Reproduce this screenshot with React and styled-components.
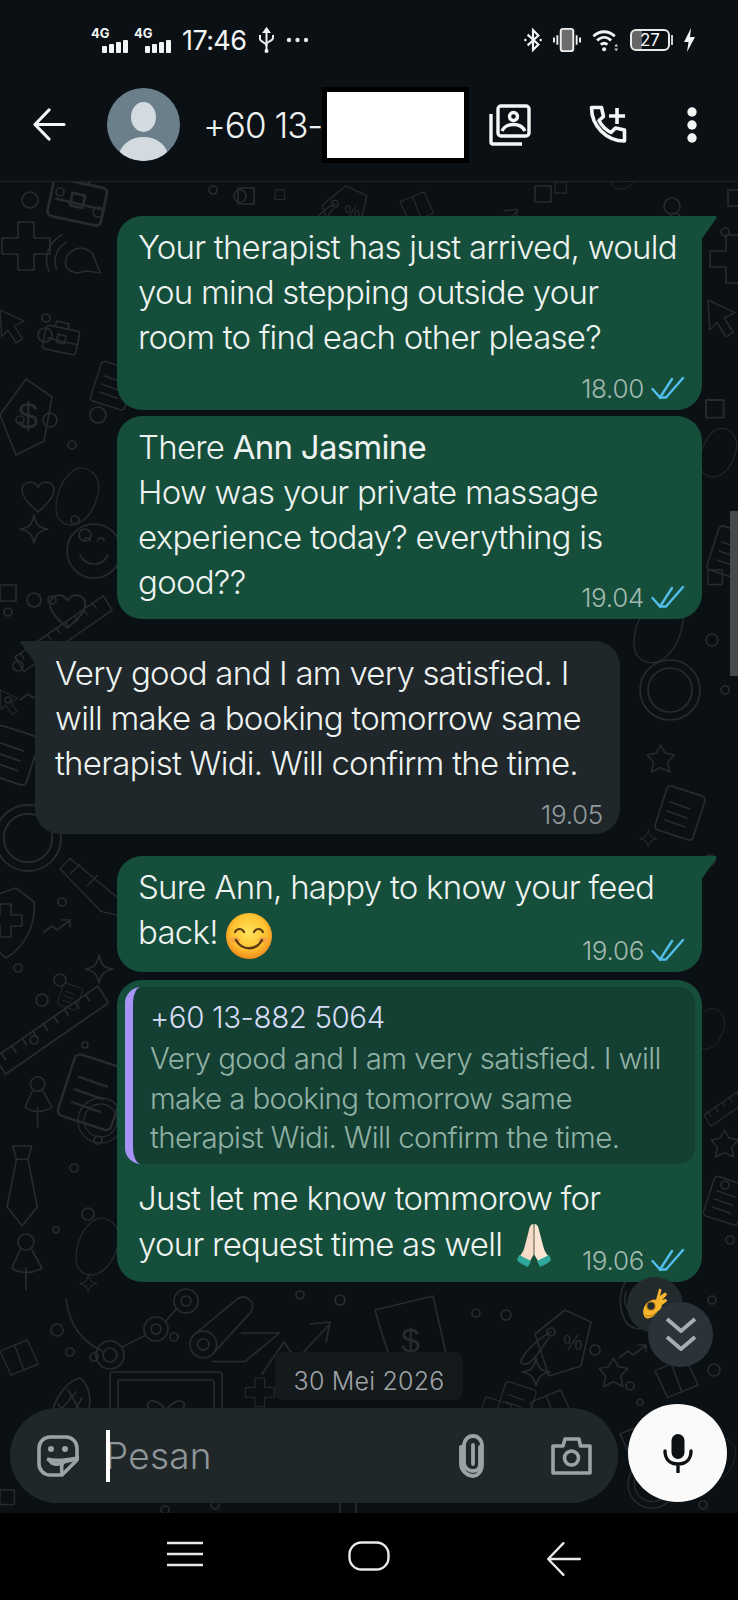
import React from 'react';
import styled, { createGlobalStyle } from 'styled-components';

const GlobalStyle = createGlobalStyle`
  html, body {
    margin: 0;
    padding: 0;
    background: #0b1014;
  }
  * {
    box-sizing: border-box;
  }
`;

const Screen = styled.div`
  width: 738px;
  height: 1600px;
  display: flex;
  flex-direction: column;
  overflow: hidden;
  background: #0b1014;
  color: #eef2f1;
  font-family: Inter, 'Noto Sans', sans-serif;
  font-weight: 300;
`;

/* status bar */
const StatusBar = styled.div`
  height: 80px;
  flex: none;
  display: flex;
  align-items: center;
  justify-content: space-between;
  padding: 0 43px 0 93px;
`;

const StatusGroup = styled.div`
  display: flex;
  align-items: center;
  gap: ${props => props.$gap}px;
`;

const Clock = styled.span`
  margin-left: 3px;
  font-size: 27px;
  font-weight: 400;
  letter-spacing: -0.6px;
  color: #f2f4f4;
`;

const BatteryBox = styled.div`
  width: 40px;
  height: 22px;
  border: 2px solid #e8eaea;
  border-radius: 6px;
  display: flex;
  align-items: center;
  justify-content: center;
  overflow: hidden;
  font-size: 17px;
  font-weight: 400;
  color: #f2f4f4;
  background: linear-gradient(90deg, #666 0 28%, transparent 28%);
`;

/* header */
const Header = styled.header`
  height: 102px;
  flex: none;
  display: flex;
  align-items: center;
  padding: 0 41px 12px 33px;
  border-bottom: 1px solid #1d2327;
`;

const Avatar = styled.div`
  width: 73px;
  height: 73px;
  margin-left: 41px;
  flex: none;
  border-radius: 50%;
  overflow: hidden;
  background: #6b7f8b;
`;

const Title = styled.div`
  margin-left: 23px;
  width: 113px;
  flex: none;
  font-size: 35px;
  font-weight: 300;
  letter-spacing: -1px;
  white-space: nowrap;
`;

const Redaction = styled.div`
  position: relative;
  width: 147px;
  height: 76px;
  margin-left: 6px;
  flex: none;
  background: #fff;
  border: 5px solid #000;
`;

const HeaderActions = styled.div`
  margin-left: auto;
  display: flex;
  align-items: center;
  gap: 58px;
`;

/* chat */
const Chat = styled.main`
  position: relative;
  flex: 1;
  display: flex;
  flex-direction: column;
  padding: 34px 0 10px;
  overflow: hidden;
`;

const Wallpaper = styled.svg`
  position: absolute;
  inset: 0;
  width: 738px;
  height: 1331px;
  fill: none;
  stroke: #272b2e;
  stroke-width: 1.7;
  stroke-linecap: round;
  stroke-linejoin: round;

  text {
    fill: #272b2e;
    stroke: none;
    font-family: 'Liberation Sans', sans-serif;
  }
`;

const MessageList = styled.div`
  position: relative;
  display: flex;
  flex-direction: column;
`;

const Bubble = styled.div`
  position: relative;
  width: 585px;
  margin-top: ${props => props.$gap || 0}px;
  margin-left: ${props => (props.$incoming ? '35px' : '117px')};
  padding: ${props => (props.$incoming ? '10px 17px 5px 20px' : '9px 17px 7px 21px')};
  background: ${props => (props.$incoming ? '#1f272a' : '#154e3a')};
  border-radius: 25px;
  border-top-left-radius: ${props => (props.$incoming ? 0 : 25)}px;
  border-top-right-radius: ${props => (props.$tail ? 0 : 25)}px;

  ${props =>
    props.$tail &&
    `&::after {
      content: '';
      position: absolute;
      top: 0;
      right: -15px;
      width: 16px;
      height: 24px;
      background: #154e3a;
      clip-path: polygon(0 0, 92% 0, 100% 6%, 0 100%);
    }`}

  ${props =>
    props.$incoming &&
    `&::before {
      content: '';
      position: absolute;
      top: 0;
      left: -15px;
      width: 16px;
      height: 24px;
      background: #1f272a;
      clip-path: polygon(100% 0, 8% 0, 0 6%, 100% 100%);
    }`}
`;

const Line = styled.div`
  width: fit-content;
  height: ${props => props.$height || 45}px;
  font-size: 33px;
  line-height: ${props => props.$height || 45}px;
  letter-spacing: -0.75px;
  color: #eef3f1;
  white-space: pre;

  strong {
    font-weight: 400;
  }
`;

const Meta = styled.div`
  position: relative;
  height: 30px;
  margin-top: ${props => props.$top}px;
  margin-left: auto;
  width: fit-content;
  display: flex;
  align-items: center;
  justify-content: flex-end;
  gap: 7px;
  font-size: 26px;
  letter-spacing: -0.3px;
  font-weight: 300;
  color: ${props => (props.$incoming ? '#949b9f' : '#a2b9af')};
`;

const ReplyBubble = styled(Bubble)`
  padding-top: 7px;
`;

const Quote = styled.div`
  margin: 0 -10px 11px -13px;
  padding: 10px 0 0 17px;
  height: 177px;
  background: #143f33;
  border-left: 8px solid #a593f5;
  border-radius: 16px;
`;

const QuoteName = styled.div`
  margin-bottom: 2px;
  font-size: 29.5px;
  line-height: 40px;
  letter-spacing: -0.4px;
  color: #d6dcf6;
`;

const QuoteText = styled.div`
  font-size: 29.5px;
  line-height: 39.5px;
  letter-spacing: -0.62px;
  color: #90b1a3;
  white-space: pre;
`;

const InlineEmoji = styled.svg`
  display: inline-block;
  margin: -8px 0 -8px ${props => props.$left}px;
  vertical-align: ${props => props.$drop}px;
`;

const ReactionBadge = styled.div`
  position: absolute;
  top: 1095px;
  right: 55px;
  width: 56px;
  height: 56px;
  display: flex;
  justify-content: center;
  padding-top: 11px;
  border-radius: 50%;
  background: #232a2e;
`;

const ScrollButton = styled.div`
  position: absolute;
  top: 1120px;
  right: 25px;
  width: 65px;
  height: 65px;
  display: flex;
  align-items: center;
  justify-content: center;
  border-radius: 50%;
  background: #2a3338;
`;

const ScrollTrack = styled.div`
  position: absolute;
  top: 329px;
  right: 0;
  width: 8px;
  height: 165px;
  background: #45494c;
`;

const Footer = styled.div`
  position: relative;
  margin-top: auto;
  display: flex;
  flex-direction: column;
  align-items: flex-start;
`;

const DateChip = styled.div`
  align-self: flex-start;
  margin: 0 0 4px 275px;
  width: 188px;
  height: 48px;
  padding-top: 10px;
  display: flex;
  align-items: center;
  justify-content: center;
  border-radius: 8px;
  background: #14191c;
  font-size: 25px;
  font-weight: 300;
  letter-spacing: 0.2px;
  color: #a0a5a8;
`;

const ComposerRow = styled.div`
  display: flex;
  align-items: flex-start;
  width: 100%;
  padding: 0 11px 0 10px;
`;

const Composer = styled.div`
  width: 608px;
  height: 95px;
  margin-top: 4px;
  display: flex;
  align-items: center;
  padding: 0 26px 0 27px;
  border-radius: 48px;
  background: #202729;
`;

const Caret = styled.div`
  position: relative;
  width: 4px;
  height: 52px;
  margin-left: 27px;
  background: #fff;
`;

const Placeholder = styled.div`
  margin-left: -5px;
  flex: 1;
  font-size: 37px;
  font-weight: 300;
  letter-spacing: 0.2px;
  color: #8f9699;
`;

const MicButton = styled.div`
  width: 99px;
  height: 98px;
  margin-left: 10px;
  display: flex;
  align-items: center;
  justify-content: center;
  border-radius: 50%;
  background: #fafafa;
`;

const NavBar = styled.nav`
  height: 87px;
  flex: none;
  display: flex;
  align-items: flex-start;
  padding: 28px 156px 0 167px;
  justify-content: space-between;
  background: #000;
`;

/* status icons */
const Signal = () => (
  <svg width="36" height="25" viewBox="0 0 36 25" overflow="visible">
    <text x="-2" y="10" fontSize="13" fontWeight="700" fill="#f2f4f4" fontFamily="Inter, sans-serif">4G</text>
    <rect x="9" y="18" width="5" height="7" rx="1" fill="#f2f4f4" />
    <rect x="16" y="16" width="5" height="9" rx="1" fill="#f2f4f4" />
    <rect x="23" y="14" width="5" height="11" rx="1" fill="#f2f4f4" />
    <rect x="30" y="12" width="5" height="13" rx="1" fill="#f2f4f4" />
  </svg>
);

const Usb = () => (
  <svg width="17" height="27" viewBox="0 0 17 27" fill="none" stroke="#eef0f0" strokeWidth="2" style={{ marginLeft: 5 }}>
    <path d="M8.5 2v23" />
    <path d="M6 5l2.5-3.5L11 5z" fill="#eef0f0" />
    <path d="M2 8v4c0 3 6.5 3.5 6.5 7M15 8v3c0 3-6.5 3.5-6.5 6" />
    <circle cx="8.5" cy="24" r="2" fill="#eef0f0" stroke="none" />
  </svg>
);

const Dots3 = () => (
  <svg width="23" height="6" viewBox="0 0 23 6" fill="#e4e6e6" style={{ marginLeft: 4 }}>
    <circle cx="3" cy="3" r="2.2" />
    <circle cx="11.5" cy="3" r="2.2" />
    <circle cx="20" cy="3" r="2.2" />
  </svg>
);

const Bluetooth = () => (
  <svg width="18" height="26" viewBox="0 0 20 26" fill="none" stroke="#f2f4f4" strokeWidth="2.4">
    <path d="M4 7l12 11-6 6V2l6 6L4 19" />
    <circle cx="1.5" cy="13" r="1.4" fill="#f2f4f4" stroke="none" />
    <circle cx="18.5" cy="13" r="1.4" fill="#f2f4f4" stroke="none" />
  </svg>
);

const Vibrate = () => (
  <svg width="28" height="26" viewBox="0 0 29 26" fill="none" stroke="#eceeee" strokeWidth="2">
    <rect x="8" y="1.5" width="13" height="23" rx="2.5" fill="#6c6c6c" />
    <path d="M4.5 8v10M1 10.5v5M24.5 8v10M28 10.5v5" />
  </svg>
);

const Wifi = () => (
  <svg width="27" height="26" viewBox="0 0 29 26" fill="none" stroke="#f2f4f4" strokeWidth="3">
    <path d="M1.5 9c7-6.5 16-6.5 23 0M5.5 13.5c4.700-4.500 10.300-4.500 15 0M9.500 18c2.300-2 4.700-2 7 0" />
    <circle cx="13" cy="23" r="2.200" fill="#f2f4f4" stroke="none" />
    <path d="M26 17l-2 3h4zM26 25l-2-3h4z" fill="#d0d0d0" stroke="none" />
  </svg>
);

const Battery = () => (
  <StatusGroup $gap={1}>
    <BatteryBox>27</BatteryBox>
    <svg width="2" height="10"><rect width="2" height="10" fill="#cfcfcf" /></svg>
  </StatusGroup>
);

const Bolt = () => (
  <svg width="11" height="24" viewBox="0 0 11 24" fill="#f2f4f4">
    <path d="M7 0L0 14h4.500L3 24l8-15H6z" />
  </svg>
);

/* header icons */
const BackArrow = ({ size = 33, width = 3.2, color = '#f4f6f6' }) => (
  <svg width={size} height={size} viewBox="0 0 33 33" fill="none" stroke={color} strokeWidth={width} strokeLinecap="round" strokeLinejoin="round">
    <path d="M31 16.500H3M16 2L2 16.500 16 31" />
  </svg>
);

const GalleryIcon = () => (
  <svg width="42" height="42" viewBox="0 0 42 42" fill="none" stroke="#f4f6f6" strokeWidth="3.400">
    <rect x="9" y="2" width="31" height="30" rx="3" />
    <circle cx="24.500" cy="12.500" r="4" />
    <path d="M13 27c2.500-5 7-6.500 11.500-6.500S33.500 22 36 27" />
    <path d="M2 10v28a2 2 0 0 0 2 2h29" />
  </svg>
);

const CallAddIcon = () => (
  <svg width="40" height="40" viewBox="0 0 40 40" fill="none" stroke="#f4f6f6" strokeWidth="3.600" strokeLinejoin="round">
    <path d="M2.500 2.500h10l2 9-4.500 4c2.500 5 7 9.500 12 12l4.500-4.500 9 2v11c-18 0-33-15-33-33.500z" />
    <path d="M28 3v16M20 11h16" />
  </svg>
);

const MoreIcon = () => (
  <svg width="10" height="36" viewBox="0 0 10 36" fill="#f4f6f6">
    <circle cx="5" cy="5" r="4.700" />
    <circle cx="5" cy="18" r="4.700" />
    <circle cx="5" cy="31" r="4.700" />
  </svg>
);

const Ticks = () => (
  <svg width="34" height="24" viewBox="0 0 34 24" fill="none" stroke="#53bdeb" strokeWidth="2.400" strokeLinecap="round">
    <path d="M1.500 13l7.500 8.500L21 3" />
    <path d="M15 21.500L32 2M9 21.500h6" />
  </svg>
);

/* emoji */
const SmileEmoji = () => (
  <InlineEmoji $left={8} $drop={-7} width="46" height="46" viewBox="0 0 46 46">
    <defs>
      <radialGradient id="smileFace" cx="50%" cy="42%" r="58%">
        <stop offset="0%" stopColor="#ffe45c" />
        <stop offset="65%" stopColor="#fdc22f" />
        <stop offset="100%" stopColor="#f08a1d" />
      </radialGradient>
    </defs>
    <circle cx="23" cy="23" r="23" fill="url(#smileFace)" />
    <ellipse cx="9" cy="27" rx="5" ry="3" fill="#f79a4a" opacity="0.7" />
    <ellipse cx="37" cy="27" rx="5" ry="3" fill="#f79a4a" opacity="0.7" />
    <path d="M9 19c2-4 7-4 9 0M28 19c2-4 7-4 9 0" fill="none" stroke="#5b3a14" strokeWidth="2.200" strokeLinecap="round" />
    <path d="M10 27c6 11 20 11 26 0" fill="none" stroke="#5b3a14" strokeWidth="2.500" strokeLinecap="round" />
  </InlineEmoji>
);

const PrayEmoji = () => (
  <InlineEmoji $left={14} $drop={-3} width="36" height="44" viewBox="0 0 36 44">
    <path d="M17.500 1c-3 0-4 3-5 8L8 26c-1 3-3 5-4 7l10 5 3.500-6z" fill="#f6dcc8" />
    <path d="M18.500 1c3 0 4 3 5 8l4.500 17c1 3 3 5 4 7l-10 5-3.500-6z" fill="#fbe6d6" />
    <path d="M18 3v28" stroke="#c9a48e" strokeWidth="1" />
    <path d="M3 32l-2 5c2 3 7 5 11 7l3-6zM33 32l2 5c-2 3-7 5-11 7l-3-6z" fill="#2fa79a" />
  </InlineEmoji>
);

const OkEmoji = () => (
  <svg width="28" height="33" viewBox="0 0 28 33">
    <path d="M18 1c2-1 3 1 2 3l-1 4 4-3c2-1 4 1 2 3l-4 4 3-1c2 0 3 2 1 3l-4 3c-1 6-6 11-12 13-3 1-5 0-6-2-2-5 0-11 4-14 3-2 6-3 8-2z" fill="#f7b52b" />
    <circle cx="10" cy="18" r="4" fill="#232a2e" stroke="#9a6a10" strokeWidth="1.200" />
    <path d="M4 27c3 2 8 1 11-2" fill="none" stroke="#c9851a" strokeWidth="1.500" />
  </svg>
);

/* composer icons */
const StickerIcon = () => (
  <svg width="42" height="42" viewBox="0 0 42 42" fill="none" stroke="#9ca3a5" strokeWidth="3.600" strokeLinejoin="round">
    <path d="M13 2h16c6 0 11 5 11 11v12L25 40H13C7 40 2 35 2 29V13C2 7 7 2 13 2z" />
    <path d="M10 24c6 2 15 2 31-1 0 1-9 2-14 4-2 1-3 4-2 12" />
    <path d="M12 24c2 5 7 6 13 4" />
    <circle cx="14" cy="14" r="3" fill="#9ca3a5" stroke="none" />
    <circle cx="28" cy="14" r="3" fill="#9ca3a5" stroke="none" />
  </svg>
);

const ClipIcon = () => (
  <svg width="28" height="44" viewBox="0 0 28 44" fill="none" stroke="#9ca3a5" strokeWidth="3.800" strokeLinecap="round" style={{ marginRight: 64 }}>
    <path d="M21 13v17c0 4-3 7-7 7s-9-3-9-8V12C5 6 9 2 14 2s9 4 9 10v18c0 7-4 12-9 12S2 37 2 30V13" />
    <path d="M14 11v19" />
  </svg>
);

const CameraIcon = () => (
  <svg width="41" height="38" viewBox="0 0 41 38" fill="none" stroke="#9ca3a5" strokeWidth="3.600" strokeLinejoin="round">
    <path d="M2 9h10l2-7h14l1.500 7H39v27H2z" />
    <circle cx="20.500" cy="21" r="7" />
  </svg>
);

const MicIcon = () => (
  <svg width="30" height="40" viewBox="0 0 30 40" fill="none" stroke="#0d1114" strokeWidth="3.400" strokeLinecap="round">
    <rect x="8.500" y="1" width="13" height="25" rx="6.500" fill="#0d1114" stroke="none" />
    <path d="M2 18c0 9 6 13 13 13s13-4 13-13M15 31v8" />
  </svg>
);

const DoubleChevron = () => (
  <svg width="34" height="38" viewBox="0 0 34 38" fill="none" stroke="#a4aeb4" strokeWidth="3.800" strokeLinejoin="round">
    <path d="M3 3l14 12L31 3M3 21l14 12 14-12" />
  </svg>
);

/* nav icons */
const MenuIcon = () => (
  <svg width="36" height="26" viewBox="0 0 36 26" fill="none" stroke="#e8eaea" strokeWidth="2.600">
    <path d="M0 2h36M0 13h36M0 24h36" />
  </svg>
);

const HomeIcon = () => (
  <svg width="42" height="30" viewBox="0 0 42 30" fill="none" stroke="#e8eaea" strokeWidth="2.400" style={{ marginLeft: -11 }}>
    <rect x="1.500" y="1.500" width="39" height="27" rx="12" />
  </svg>
);

/* wallpaper doodles, page coordinates with the chat's top cut off */
const doodles = {
  puzzle: <path d="M0 0h16v16h16v16H16v16H0V32h-16V16H0z" />,
  signal: (
    <g>
      <path d="M0 18a16 16 0 0 1 28-14l8 20-16-2a16 16 0 0 1-20-4z" />
      <path d="M-10 20c-4-10 0-22 10-28M-18 22c-6-14-1-30 14-38" />
    </g>
  ),
  bag: (
    <g>
      <rect x="0" y="8" width="34" height="24" rx="3" transform="rotate(12 17 20)" />
      <path d="M11 6l2-5 12 3-1 5M4 18l30 7" />
      <rect x="13" y="15" width="8" height="8" transform="rotate(12 17 20)" />
    </g>
  ),
  cursor: <path d="M0 0l30 14-12 6 10 16-8 5-10-16-8 8z" />,
  tag: (
    <g>
      <path d="M4 30L30-6l26 18-8 44-28 14z" />
      <text x="22" y="44" fontSize="36">$</text>
    </g>
  ),
  note: (
    <g>
      <rect x="0" y="0" width="40" height="46" rx="4" transform="rotate(18 20 23)" />
      <path d="M10 12l20 7M7 21l20 7M5 30l20 7" />
    </g>
  ),
  heart: <path d="M16 30C4 20 0 14 0 8c0-8 11-11 16-3 5-8 16-5 16 3 0 6-4 12-16 22z" />,
  spark: <path d="M14 0c2 10 5 13 14 14-9 2-12 5-14 14-2-9-5-12-14-14 9-1 12-4 14-14z" />,
  smile: (
    <g>
      <circle cx="26" cy="26" r="27" />
      <path d="M12 30c6 12 22 12 28 0M16 16a3 3 0 0 1 6 0M30 16a3 3 0 0 1 6 0" />
    </g>
  ),
  blob: <path d="M6 0c20-10 40 10 34 34-4 20-16 40-34 44-14 2-26-6-26-24C-20 34-10 10 6 0z" />,
  shield: (
    <g>
      <path d="M0 8l28-10 18 14c2 22-8 44-28 56C6 60-4 30 0 8z" />
      <path d="M12 14h11v11h11v11H23v11H12V36H1V25h11z" />
    </g>
  ),
  pencil: (
    <g>
      <path d="M0 8l12-12 56 46 4 22-24-6z" />
      <path d="M12 14l12-12M32 28l12-12" />
    </g>
  ),
  ruler: (
    <g>
      <path d="M0 50l98-68 10 16-98 68z" />
      <path d="M6 46l4 6M16 39l4 6M26 32l4 6M36 25l4 6M46 18l4 6M56 11l4 6M66 4l4 6M76-3l4 6M86-10l4 6" />
    </g>
  ),
  coin: (
    <g>
      <circle cx="30" cy="30" r="30" />
      <circle cx="30" cy="30" r="22" />
    </g>
  ),
  tie: <path d="M6 0h20l-4 14 10 50-16 20L0 64 10 14zM10 14h12" />,
  pin: (
    <g>
      <circle cx="14" cy="10" r="8" />
      <path d="M8 18l-8 18c8 6 20 6 30 0l-10-18M14 36v22" />
    </g>
  ),
  gift: (
    <g>
      <rect x="-20" y="-18" width="112" height="110" rx="3" />
      <rect x="-12" y="-10" width="96" height="94" rx="2" />
      <path d="M14 20h46v20H14zM18 40v36h38V40zM36 20v56M36 20c-10-14-24-10-16 0zM36 20c10-14 24-10 16 0z" />
    </g>
  ),
  trend: <path d="M0 34L22 2l12 18L66-14M48-16l20-2-4 20" />,
  trendSmall: <path d="M0 12l8-6 5 4 12-9M18 0h8v7" />,
  receipt: (
    <g>
      <path d="M0 0l58-14 14 62c-16 0-34 8-48 18C14 48 6 22 0 0z" />
      <text x="26" y="42" fontSize="34">$</text>
    </g>
  ),
  pricetag: (
    <g>
      <path d="M0 24L30 0l26 12-10 44-32 10z" />
      <circle cx="16" cy="22" r="4" />
      <text x="28" y="40" fontSize="22">%</text>
      <path d="M16 22C0 30-20 52-12 54c8 2 14-10 26-26" />
    </g>
  ),
  star: <path d="M14 0l5 9 10 2-7 8 2 11-10-5-10 5 2-11-7-8 10-2z" />,
  box: (
    <g>
      <path d="M0 14L34 0l14 30-34 14z" />
      <path d="M18 6l12 32" />
    </g>
  ),
  mic: (
    <g>
      <path d="M30 0C10 4 2 30 14 52c4 6 12 8 18 6" />
      <path d="M14 22C10 34 16 44 26 46" />
    </g>
  ),
  roll: (
    <g>
      <circle cx="14" cy="52" r="14" />
      <circle cx="14" cy="52" r="6" />
      <path d="M4 42L50 4c10-6 20 4 14 14L24 62M54 40h40L58 70H24" />
    </g>
  ),
  network: (
    <g>
      <path d="M-44-36C-40-8-28 6-8 16" />
      <circle cx="0" cy="20" r="14" />
      <circle cx="0" cy="20" r="7" />
      <path d="M12 12L36 0" />
      <circle cx="46" cy="-6" r="12" />
      <circle cx="46" cy="-6" r="5" />
      <path d="M56-14L66-26" />
      <circle cx="76" cy="-34" r="12" />
      <circle cx="76" cy="-34" r="5" />
    </g>
  ),
  square: <rect x="0" y="0" width="16" height="16" />,
  pine: (
    <g>
      <path d="M0 50C0 26 14 4 30 0c14 10 14 40-6 54-10 6-24 4-24-4z" />
      <path d="M8 26l20 24M18 12l14 24M4 40l22-26M14 50l18-30" />
    </g>
  )
};

const doodleItems = [
  ['bag', 50, 170, 1.6], ['square', 238, 188], ['square', 275, 190, 0.6], ['pricetag', 322, 186, 0.8], ['box', 400, 192, 0.7],
  ['trend', 470, 222, 0.7], ['square', 535, 186], ['square', 555, 182, 0.7], ['blob', 620, 150, 0.5], ['square', 728, 190],
  ['puzzle', 18, 222], ['signal', 66, 250, 0.95], ['cursor', 0, 310, 0.8], ['bag', 44, 320], ['tag', -4, 385], ['note', 95, 365, 0.9],
  ['heart', 22, 482], ['spark', 20, 515], ['smile', 68, 525], ['blob', 70, 470, 0.7], ['heart', 50, 595, 1.1], ['square', 0, 585],
  ['ruler', 15, 612, 0.9], ['puzzle', 726, 235], ['cursor', 708, 300, 0.9], ['square', 706, 400, 1.1], ['blob', 712, 430, 0.6],
  ['note', 712, 530], ['square', 708, 570, 0.9], ['coin', 640, 660], ['star', 648, 745, 0.9], ['note', 660, 790, 1], ['spark', 640, 830, 0.6],
  ['blob', 650, 600, 0.8], ['cursor', 0, 690, 0.6], ['trendSmall', 20, 688], ['note', -10, 730, 1.1], ['coin', -5, 805, 1.1],
  ['pencil', 60, 862, 0.85], ['shield', -12, 890], ['trendSmall', 44, 920], ['spark', 85, 955], ['note', 60, 985, 0.5], ['ruler', -5, 1005, 1.05],
  ['pin', 25, 1075, 0.9], ['coin', 78, 1098, 0.75], ['note', 65, 1060, 1.4], ['tie', 7, 1146, 0.95], ['blob', 90, 1220, 0.7], ['pin', 12, 1232, 1],
  ['spark', 80, 1275, 0.6], ['blob', 704, 1010, 0.5], ['ruler', 704, 1080, 0.7], ['note', 708, 1180, 0.9], ['star', 712, 1130, 0.9],
  ['network', 110, 1335], ['roll', 190, 1295, 0.95], ['trend', 262, 1340, 1], ['receipt', 375, 1310], ['pricetag', 535, 1310], ['mic', 612, 1270],
  ['trendSmall', 620, 1345], ['star', 600, 1358, 0.95], ['box', 655, 1358, 0.9], ['spark', 522, 1358], ['gift', 130, 1390],
  ['pine', 50, 1378], ['box', 0, 1340, 0.8], ['puzzle', 255, 1378, 0.6], ['coin', 628, 1460, 0.8], ['box', 620, 1420, 1], ['note', 500, 1385, 0.8], ['blob', 715, 1440, 0.5],
  ['square', 340, 1500, 1], ['pine', 330, 1455, 0.7], ['note', 480, 1400, 0.7], ['square', 0, 1490, 0.9], ['box', 530, 1390, 0.9]
];

const doodleDots = [
  [213, 190, 4], [240, 196, 6], [30, 200, 8], [60, 192, 4], [98, 212, 5], [46, 318, 4], [45, 335, 7], [20, 420, 4], [50, 420, 7], [72, 445, 4],
  [98, 415, 8], [75, 520, 4], [85, 535, 6], [8, 612, 4], [34, 600, 7], [52, 600, 4], [690, 268, 4], [675, 218, 5], [725, 232, 4], [672, 206, 8],
  [18, 666, 5], [8, 700, 3], [725, 690, 4], [712, 640, 6], [710, 860, 5], [62, 902, 4], [60, 980, 6], [42, 1000, 6], [18, 968, 4], [34, 1040, 4],
  [85, 1045, 3], [98, 1140, 4], [74, 1168, 4], [88, 1214, 6], [56, 1230, 3], [725, 1185, 4], [712, 1300, 4], [730, 1240, 4], [300, 1295, 4],
  [340, 1300, 5], [506, 1315, 5], [476, 1313, 4], [595, 1350, 5], [57, 1330, 6], [70, 1352, 4], [94, 1357, 4], [174, 1337, 4], [714, 1370, 6],
  [630, 1386, 4], [640, 1402, 3], [165, 1510, 4], [215, 1505, 4], [703, 1505, 4]
];

const WallpaperLayer = () => (
  <Wallpaper viewBox="0 182 738 1331">
    {doodleItems.map(([name, x, y, scale = 1], i) => (
      <g key={i} transform={`translate(${x} ${y}) scale(${scale})`}>
        {doodles[name]}
      </g>
    ))}
    {doodleDots.map(([x, y, r], i) => (
      <circle key={i} cx={x} cy={y} r={r} />
    ))}
  </Wallpaper>
);

const Status = ({ time, top, incoming }) => (
  <Meta $top={top} $incoming={incoming}>
    {time}
    {!incoming && <Ticks />}
  </Meta>
);

const App = () => (
  <Screen>
    <GlobalStyle />
    <StatusBar>
      <StatusGroup $gap={7}>
        <Signal />
        <Signal />
        <Clock>17:46</Clock>
        <Usb />
        <Dots3 />
      </StatusGroup>
      <StatusGroup $gap={11}>
        <Bluetooth />
        <Vibrate />
        <Wifi />
        <Battery />
        <Bolt />
      </StatusGroup>
    </StatusBar>

    <Header>
      <BackArrow />
      <Avatar>
        <svg width="73" height="73" viewBox="0 0 73 73" fill="#d3dbe0">
          <ellipse cx="36.500" cy="29" rx="12.500" ry="15" />
          <path d="M12 66c3-11 13-17 24.500-17S58 55 61 66c-6 5-15 7-24.500 7S18 71 12 66z" />
        </svg>
      </Avatar>
      <Title>+60 13-</Title>
      <Redaction />
      <HeaderActions>
        <GalleryIcon />
        <CallAddIcon />
        <MoreIcon />
      </HeaderActions>
    </Header>

    <Chat>
      <WallpaperLayer />
      <MessageList>
        <Bubble $tail>
          <Line>Your therapist has just arrived, would</Line>
          <Line>you mind stepping outside your</Line>
          <Line>room to find each other please?</Line>
          <Status time="18.00" top={13} />
        </Bubble>
        <Bubble $gap={6}>
          <Line>
            There <strong>Ann Jasmine</strong>
          </Line>
          <Line>How was your private massage</Line>
          <Line>experience today? everything is</Line>
          <Line>good??</Line>
          <Status time="19.04" top={-23} />
        </Bubble>
        <Bubble $gap={22} $incoming>
          <Line>Very good and I am very satisfied. I</Line>
          <Line>will make a booking tomorrow same</Line>
          <Line>therapist Widi. Will confirm the time.</Line>
          <Status time="19.05" top={13} incoming />
        </Bubble>
        <Bubble $gap={22} $tail>
          <Line>Sure Ann, happy to know your feed</Line>
          <Line>
            back!
            <SmileEmoji />
          </Line>
          <Status time="19.06" top={-20} />
        </Bubble>
        <ReplyBubble $gap={8}>
          <Quote>
            <QuoteName>+60 13-882 5064</QuoteName>
            <QuoteText>{'Very good and I am very satisfied. I will\nmake a booking tomorrow same\ntherapist Widi. Will confirm the time.'}</QuoteText>
          </Quote>
          <Line $height={46}>Just let me know tommorow for</Line>
          <Line $height={46}>
            your request time as well
            <PrayEmoji />
          </Line>
          <Status time="19.06" top={-22} />
        </ReplyBubble>
      </MessageList>

      <ScrollTrack />
      <ReactionBadge>
        <OkEmoji />
      </ReactionBadge>
      <ScrollButton>
        <DoubleChevron />
      </ScrollButton>

      <Footer>
        <DateChip>30 Mei 2026</DateChip>
        <ComposerRow>
          <Composer>
            <StickerIcon />
            <Caret />
            <Placeholder>Pesan</Placeholder>
            <ClipIcon />
            <CameraIcon />
          </Composer>
          <MicButton>
            <MicIcon />
          </MicButton>
        </ComposerRow>
      </Footer>
    </Chat>

    <NavBar>
      <MenuIcon />
      <HomeIcon />
      <BackArrow size={36} width={2.2} color="#e8eaea" />
    </NavBar>
  </Screen>
);

export default App;
